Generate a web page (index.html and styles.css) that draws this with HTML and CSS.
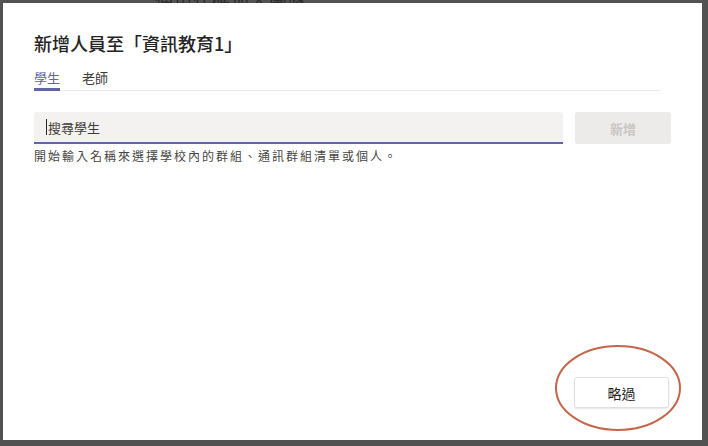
FILE: index.html
```html
<!doctype html>
<html lang="zh-Hant">
  <head>
    <meta charset="utf-8">
    <title>新增人員</title>
    <link rel="stylesheet" href="styles.css">
  </head>
  <body>
    <div class="backdrop-text">使用代碼加入團隊</div>

    <div class="dialog">
      <h1 class="dialog-title">新增人員至「資訊教育1」</h1>

      <div class="tabs">
        <div class="tab tab-active">學生</div>
        <div class="tab">老師</div>
      </div>

      <div class="search-row">
        <div class="search-box">
          <span class="caret"></span>
          <span class="placeholder">搜尋學生</span>
        </div>
        <button class="btn-add" disabled>新增</button>
      </div>
      <div class="hint">開始輸入名稱來選擇學校內的群組、通訊群組清單或個人。</div>

      <div class="spacer"></div>

      <div class="footer">
        <button class="btn-skip">略過</button>
      </div>
    </div>

    <svg class="mark" width="130" height="90" viewBox="0 0 130 90">
      <ellipse cx="65" cy="45" rx="62" ry="42" fill="none" stroke="#c4664a" stroke-width="2"/>
    </svg>
  </body>
</html>
```

FILE: styles.css
```css
* { box-sizing: border-box; }

:root {
  --font-family: "Noto Sans CJK TC", "Noto Sans", sans-serif;
  --brand: #6264a7;
  --text: #252424;
  --overlay: #525252;
}

html,
body {
  margin: 0;
  padding: 0;
  width: 708px;
  height: 446px;
  overflow: hidden;
  background-color: var(--overlay);
  font-family: var(--font-family);
  color: var(--text);
}

body {
  position: relative;
  padding: 3px 6px 6px 3px;
}

/* text of the page behind the dialog */
.backdrop-text {
  position: absolute;
  top: -13px;
  left: 155px;
  font-size: 18px;
  color: #2a2a2a;
  letter-spacing: 1px;
}

/* Dialog */
.dialog {
  position: relative;
  background: #fff;
  width: 699px;
  height: 437px;
  padding: 27px 32px 32px 31px;
  display: flex;
  flex-direction: column;
}

.dialog-title {
  margin: 0;
  font-size: 18px;
  font-weight: 500;
  line-height: 26px;
}

/* Tabs */
.tabs {
  display: flex;
  gap: 22px;
  margin-top: 13px;
  margin-right: 9px;
  border-bottom: 1px solid #ebebeb;
}
.tab {
  font-size: 13px;
  line-height: 18px;
  padding-bottom: 1px;
  border-bottom: 3px solid transparent;
  margin-bottom: -1px;
  color: #3b3a39;
}
.tab-active {
  color: var(--brand);
  border-bottom-color: var(--brand);
}

/* Search */
.search-row {
  display: flex;
  gap: 12px;
  margin-top: 21px;
  margin-right: -1px;
}
.search-box {
  flex: 1;
  height: 32px;
  background: #f3f2f1;
  border-radius: 3px 3px 0 0;
  border-bottom: 2px solid var(--brand);
  display: flex;
  align-items: center;
  padding-left: 12px;
}
.caret {
  width: 1px;
  height: 16px;
  background: #252424;
}
.placeholder {
  font-size: 13px;
  color: #3b3a39;
  margin-left: 1px;
}
.btn-add {
  width: 96px;
  height: 32px;
  border: none;
  border-radius: 3px;
  background: #edebe9;
  color: #c8c6c4;
  font-family: var(--font-family);
  font-size: 13px;
  font-weight: 700;
}

.hint {
  margin-top: 4px;
  font-size: 12px;
  letter-spacing: 2px;
  color: #484644;
  line-height: 16px;
}

.spacer { flex: 1; }

.footer {
  display: flex;
  justify-content: flex-end;
}
.btn-skip {
  width: 95px;
  height: 31px;
  background: #fff;
  border: 1px solid #e1dfdd;
  border-radius: 3px;
  box-shadow: 0 1px 2px rgba(0, 0, 0, 0.1);
  font-family: var(--font-family);
  font-size: 14px;
  color: var(--text);
  margin-right: 1px;
}

/* annotation circle */
.mark {
  position: absolute;
  left: 553px;
  top: 343px;
}
```
